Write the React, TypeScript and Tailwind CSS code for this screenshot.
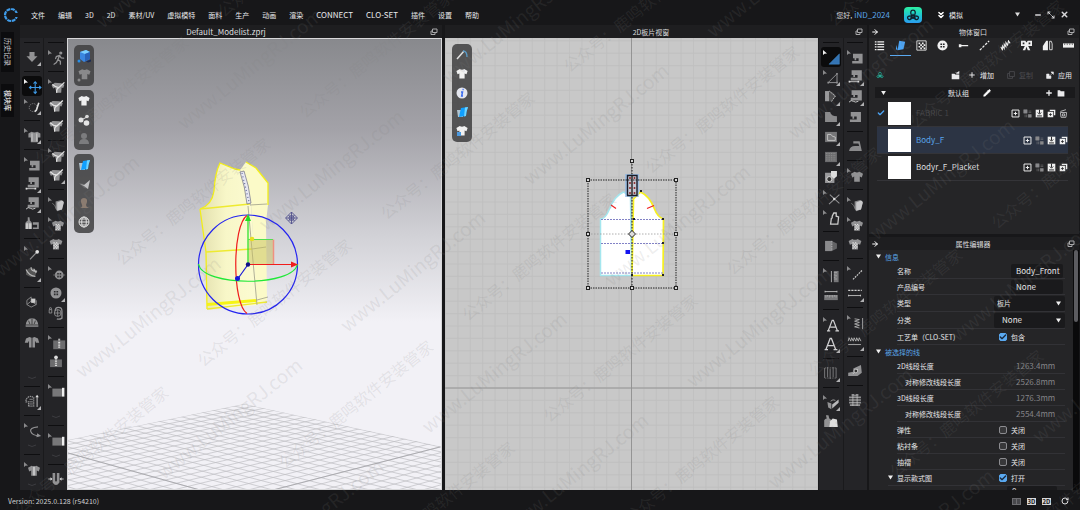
import React, { useState } from 'react';
import { Check, Pencil, Plus, RotateCw, X, ChevronsDown, Maximize2, Minus, ArrowRight } from 'lucide-react';

const SHIRT = 'M7 4 2.500 6.500 4 11l2.500-1V16.500h7V10l2.500 1L17.500 6.500 13 4q-3 2-6 0z';
const MACHINE = 'M5 4h12v12H4v-3h8V9.500H9V12H7V9.500H5z';

type ToolItem =
  | { kind: string; label: string; cursor?: boolean; corner?: boolean; active?: boolean }
  | 'sep'
  | 'more'
  | 'moreShort'
  | 'moreTall';

/** Drawings of the tool buttons, all on a 20x20 grid */
const toolArt: Record<string, React.ReactNode> = {
  down: <path d="M7 4h6v5h3.500L10 16 3.500 9H7z" />,
  walk: (
    <g fill="none" stroke="currentColor" strokeWidth="1.6" strokeLinecap="round">
      <circle cx="13.500" cy="3" r="1.200" fill="currentColor" />
      <path d="M12 6 10 11l3 2.500V17M10 11l-2 4-3 2M12 6 8 7.500 7 10M12 6l2 3 3 .5" />
    </g>
  ),
  move: (
    <g fill="none" stroke="#3f9be8" strokeWidth="1.300">
      <path d="M11.500 3v14M4.500 10h14" />
      <path d="M9.500 5 11.500 2.700 13.500 5M9.500 15l2 2.300 2-2.300M6.500 8 4.300 10l2.200 2M16.500 8l2.200 2-2.200 2" />
    </g>
  ),
  lasso: (
    <g fill="none" stroke="currentColor">
      <circle cx="9" cy="10" r="5" strokeDasharray="1.500 1.200" />
      <path d="m16 4-3 9-2 2" stroke="#ddd" strokeWidth="2" />
    </g>
  ),
  shirt: <path d={SHIRT} />,
  vest: (
    <g>
      <path d="M7 4 3 6v5h3v6h9v-6h3V6l-4-2q-3.500 1.500-7 0z" />
      <path d="M7.500 6v10M13.500 6v10" stroke="#ddd" />
    </g>
  ),
  shirtBrush: (
    <g>
      <path d="M6 4 2 7l2 4 2.500-1L8 16.500h6l.5-6.500 2 .5 1.500-4-4-2z" />
      <path d="M3 6q4 4 8 4l7-6.500M11.500 10q-4 1-3 6.500" fill="none" stroke="#e5e5e5" strokeWidth="1.5" />
    </g>
  ),
  machine: <path d={MACHINE} />,
  machineLine: (
    <g>
      <path d={MACHINE} transform="translate(1 -2)" />
      <path d="M3 15.500h11" stroke="#ddd" />
      <path d="M2.500 14.500h2v2h-2zM13 14.500h2v2h-2z" fill="#ddd" />
    </g>
  ),
  machineWave: (
    <g>
      <path d={MACHINE} transform="translate(1 -2)" />
      <path d="M3 16q2.500-3 5-1t6 0" fill="none" stroke="#ddd" />
    </g>
  ),
  mannequin: (
    <g>
      <path d="M5 2h2l.5 4L9.500 8v8h-7V8L5 6zM11 8h7v8h-7v-2h5v-3h-5z" />
      <path d="M2.500 9h3v7h-3zM6.500 9h3v7h-3z" fill="#ccc" />
    </g>
  ),
  pin: (
    <g>
      <path d="m5 16 8-8.500" stroke="currentColor" strokeWidth="1.500" />
      <circle cx="14" cy="6.500" r="2.300" fill="#e0e0e0" />
    </g>
  ),
  fold3d: (
    <g>
      <path d="M3 8q3-5 7-4l6 3-2 6-5 2-6-3z" fill="#555" />
      <path d="M3 6q4 8 11 8M9 3q-1 5 7 5M12 5l3 5" fill="none" stroke="#bbb" strokeWidth="1.3" />
    </g>
  ),
  box3d: (
    <g fill="none" stroke="currentColor">
      <path d="m4 8 5-4M4 8v5l5 3 6-3V8M9 4v5l-5 4M9 9l6 4" />
      <path d="M9 6h5v5H9z" fill="#ccc" stroke="none" />
    </g>
  ),
  cap: (
    <g>
      <path d="M2.500 15.500q0-10 7.500-10t7.500 10z" />
      <path d="M10 6v7M6 8.500l1.500 4M14 8.500l-1.500 4M3 13.500h14" stroke="#333" fill="none" />
    </g>
  ),
  pattern: <path d="M7 4 3 6 1.500 11h4V9.500H6.500V16.500h3V5zM13 4l4 2 1.500 5h-4V9.500H13.500V16.500h-3V5z" />,
  height: (
    <g>
      <path d="M6 5 3 8v3h3v5h6V6q-3-2-6-1z" fill="none" stroke="currentColor" strokeDasharray="1.500 .8" strokeWidth="1.5" />
      <path d="M7 8h4M7 11h4M7 13.500h4" stroke="currentColor" />
      <path d="M16 4v13" stroke="#ddd" />
      <path d="m14 5.500 2-3 2 3z" fill="#ddd" />
    </g>
  ),
  curve: (
    <g>
      <path d="M15 4Q4 5 6 10t10 5" fill="none" stroke="currentColor" strokeWidth="1.500" />
      <path d="m14 12 5 3.500-6 1.500z" />
    </g>
  ),
  shirtZip: (
    <g>
      <path d={SHIRT} />
      <path d="M10 5v11" stroke="#e5e5e5" strokeWidth="1.500" />
    </g>
  ),
  roll: (
    <g>
      <path d="m7 5 7-2 3 3-2 9-6 2-2-3z" fill="#8a8a8c" />
      <path d="m9 6 6-2.500q3 1 2 4L15 15l-6 1z" fill="#c8c8ca" />
      <path d="M3 7q3 2 5 7" stroke="#888" fill="none" />
    </g>
  ),
  shirtCheck: (
    <g>
      <path d={SHIRT} />
      <path d="M7 8h1.500v1.500H7zM10 8h1.500v1.500H10zM8.500 9.500H10V11H8.500zM11.500 9.500H13V11h-1.500zM7 11h1.500v1.500H7zM10 11h1.500v1.500H10zM8.500 12.500H10V14H8.500zM11.500 12.500H13V14h-1.500zM7 14h1.500v1.500H7zM10 14h1.500v1.500H10z" fill="#e5e5e5" />
    </g>
  ),
  button: (
    <g>
      <circle cx="10" cy="10" r="6.500" />
      <path d="M7.500 7.500h2v2h-2zM10.500 7.500h2v2h-2zM7.500 10.500h2v2h-2zM10.500 10.500h2v2h-2z" fill="#2c2c2e" />
    </g>
  ),
  buttonSmall: (
    <g>
      <circle cx="11.500" cy="10.500" r="5.500" />
      <path d="M4 10.500h15" stroke="#777" />
      <path d="M9 8h2v2H9zM12 8h2v2h-2zM9 11.500h2v2H9zM12 11.500h2v2h-2z" fill="#2c2c2e" />
    </g>
  ),
  buttonLock: (
    <g fill="none" stroke="currentColor">
      <path d="M2 6h3v4H2zM2.500 6V4q1-1 2 0v2" />
      <path d="M9 8q0-4.500 4-4.500T17 8v8q-3 2-6 1" strokeWidth="1.500" />
      <circle cx="12" cy="10" r="4" />
      <path d="M8 10h8M12 6v8" />
    </g>
  ),
  zipper: (
    <g>
      <path d="M4 6h15v11H4z" fill="#6c6c6e" />
      <path d="M11.500 4v12" stroke="#ddd" strokeWidth="2.500" strokeDasharray="1.200 .8" />
    </g>
  ),
  zipBlock: (
    <g>
      <path d="M3 7h14v9H3z" fill="#6c6c6e" />
      <path d="M10 7v9" stroke="#ddd" strokeWidth="2.500" strokeDasharray="1.200 1" />
      <circle cx="10" cy="4.500" r="2.200" fill="#ddd" />
    </g>
  ),
  piping: (
    <g>
      <path d="M3 5h12v10H3z" fill="#777779" />
      <path d="M15 4h3v11h-3z" fill="#eee" />
    </g>
  ),
  tube: (
    <g>
      <path d="M6 3h3v9q1 2 2 0V3h3v11q-4 6-8 0z" />
      <path d="M1 10h3M16 10h3" stroke="#ddd" />
      <path d="m3.500 8 2.500 2-2.500 2zM16.500 8 14 10l2.500 2z" fill="#ddd" />
    </g>
  ),
  triangle: <path d="M18 4v13H5z" fill="#3474b4" stroke="#4c9ae0" strokeWidth=".5" />,
  triEdit: (
    <g fill="none" stroke="currentColor" strokeWidth="1.200">
      <path d="M15 4v11H4z" />
      <path d="M14 3h2v2h-2zM3 14h2v2H3zM14 14h2v2h-2z" fill="currentColor" stroke="none" />
    </g>
  ),
  dart: (
    <g>
      <path d="M3 3h5v12H3z" fill="#9a9a9c" />
      <path d="M8 3q5 1 8 6l-6 6H8z" fill="#4a4a4c" />
      <path d="m8 3 7 6-5 7" fill="none" stroke="#ddd" strokeDasharray="2 1" />
    </g>
  ),
  poly: <path d="M3 4h6q1 5 8 5v7H3z" fill="#8a8a8c" />,
  polyInner: (
    <g>
      <path d="M3 4h14v12H3z" fill="#777779" />
      <path d="M6 7h4q1 3 5 3v4H6z" fill="none" stroke="#ccc" />
    </g>
  ),
  rectDots: (
    <g>
      <path d="M3 4h14v12H3z" fill="#6c6c6e" />
      <path d="M4 6h12M4 8.500h12M4 11h12M4 13.500h12" fill="none" stroke="#999" strokeDasharray="1 1" />
    </g>
  ),
  pocket: (
    <g>
      <path d="M3 5h11v12H3z" fill="#9a9a9c" />
      <path d="M10 3h7v6l-3.500 3L10 9z" fill="#ddd" />
      <circle cx="8" cy="12.500" r="3" fill="#333" stroke="#eee" />
    </g>
  ),
  cross: (
    <g>
      <path d="m6 5 12 11M18 5 5 17" stroke="currentColor" strokeWidth="1.300" />
      <circle cx="11.500" cy="10.500" r="1.500" fill="#ddd" />
    </g>
  ),
  bag: <path d="M8 9 7 17h9l1-9-3-1V3h-3L9 7v3" fill="none" stroke="#ccc" strokeWidth="1.600" />,
  foldPiece: (
    <g>
      <path d="M3 4h8v12H3z" fill="#8a8a8c" />
      <path d="m11 4 6 3v6l-6 3z" fill="#636365" />
      <path d="M11 4v12" stroke="#ddd" strokeDasharray="1 1" />
    </g>
  ),
  rulerV: (
    <g>
      <path d="M8 3v14" stroke="#ccc" />
      <path d="M11 3h6v14h-6z" fill="#777779" />
      <path d="M11 5h4M11 7h2M11 9h4M11 11h2M11 13h4" stroke="#ccc" strokeWidth=".6" />
    </g>
  ),
  rulerH: (
    <g>
      <path d="M3 6h14M3 5v2M17 5v2" stroke="#ccc" />
      <path d="M2 10h16v6H2z" fill="#777779" />
      <path d="M4 10v3M6 10v2M8 10v3M10 10v2M12 10v3M14 10v2M16 10v3" stroke="#ccc" strokeWidth=".6" />
    </g>
  ),
  dashDiag: <path d="M5 16 17 4" stroke="#ccc" strokeWidth="1.500" strokeDasharray="2.200 1.200" />,
  dashLines: (
    <g stroke="#ccc">
      <path d="M2 7h16" strokeWidth="1.500" strokeDasharray="2.500 1.200" />
      <path d="M2 13h15M2.500 12v2M16.500 12v2" />
    </g>
  ),
  zigzagV: <path d="m7 4 6 1-6 2 6 1.500-6 2 6 1.500-6 2 6 1.500M17 3v14" fill="none" stroke="#bbb" />,
  zigzagH: <path d="m2 9 1-4 2 4 1-4 2 4 1-4 2 4 1-4 2 4 1-4 2 4M2 13h15" fill="none" stroke="#bbb" />,
  pleat: (
    <g fill="none" stroke="#858588">
      <path d="M2.500 4v12M6 3v12M9 5v12M12.500 3v12M16 4v12" />
      <path d="M3 4h13M3 16h13" strokeDasharray="1 1" />
    </g>
  ),
  machineTilt: (
    <g>
      <path d="m2 12 6-1V7l9-4 1 9-5 4H2z" />
      <path d="m8 13 5-5" stroke="#eee" />
      <circle cx="11" cy="10" r="2.200" fill="#333" stroke="#ccc" />
    </g>
  ),
  grade: (
    <g>
      <path d="m3 8 5 2v7l-4-2z" />
      <path d="m9 11 8-6v4l-8 7z" fill="#b8b8ba" />
      <path d="M7 7q3-3 6-1" stroke="#aaa" fill="none" />
    </g>
  ),
  gift: (
    <g>
      <path d="M3 6h14v2H3zM3 9h14v2H3zM3 12h14v2H3zM4 15h12v2H4z" />
      <path d="M7.500 4v13M12.500 4v13" stroke="#ccc" fill="none" strokeWidth=".8" />
      <path d="M6 3h3l1 2 1-2h3v2.500H6z" />
    </g>
  ),
  figures: (
    <g>
      <path d="M2 8q1-2 3-2l-1-4h3l1 4 3 2v8H2z" />
      <path d="m9 9 3-3 5 1 1 9H8z" fill="#ddd" />
    </g>
  ),
  iron: <path d="M3 16q1-6 7-6h5l-1-3H8V4.500h7.500L18 16z" fill="#8a8a8c" />,
  letterA: <path d="m4 16.500 5-13h1.500l5 13M6.500 12h7M2.500 16.500h4M13 16.500h4.500" fill="none" stroke="#cfcfd1" strokeWidth="1.500" />,
};

const leftTools: ToolItem[] = [
  'sep', { kind: 'down', label: 'Simulate', corner: true },
  'sep', { kind: 'move', label: 'Select and move', cursor: true, active: true },
  { kind: 'lasso', label: 'Brush select', cursor: true, corner: true },
  'sep', { kind: 'vest', label: 'Arrange garment', cursor: true, corner: true },
  'sep', { kind: 'machine', label: 'Edit sewing', cursor: true },
  { kind: 'machineLine', label: 'Segment sewing', corner: true },
  { kind: 'machineWave', label: 'Free sewing', corner: true },
  { kind: 'mannequin', label: 'Fit sewing' },
  'sep', { kind: 'pin', label: 'Pin', cursor: true },
  { kind: 'fold3d', label: 'Fold arrangement', corner: true },
  'sep', { kind: 'box3d', label: 'Box' },
  { kind: 'cap', label: 'Cap' },
  { kind: 'pattern', label: 'Patterns' },
  'moreTall', 'sep', { kind: 'height', label: 'Measure', corner: true },
  'sep', { kind: 'curve', label: 'Curve', cursor: true },
  'moreShort', 'sep', { kind: 'shirtZip', label: 'Garment', cursor: true },
  'moreShort',
];

const leftToolsOuter: ToolItem[] = [
  'sep', { kind: 'walk', label: 'Avatar pose', cursor: true },
  'sep', { kind: 'shirtBrush', label: 'Edit style line', cursor: true },
  { kind: 'shirtBrush', label: '3D pen' },
  { kind: 'shirtBrush', label: '3D pen garment' },
  'sep', { kind: 'shirtBrush', label: 'Edit line', cursor: true },
  { kind: 'shirtBrush', label: 'Line', corner: true },
  'sep', { kind: 'roll', label: 'Edit texture', cursor: true },
  { kind: 'shirtCheck', label: 'Graphic', cursor: true },
  { kind: 'shirtCheck', label: 'Graphic all' },
  'sep', { kind: 'buttonSmall', label: 'Move button', cursor: true },
  { kind: 'button', label: 'Button', corner: true },
  { kind: 'buttonLock', label: 'Fasten button' },
  'sep', { kind: 'zipper', label: 'Edit zipper', cursor: true },
  { kind: 'zipBlock', label: 'Zipper' },
  'sep', { kind: 'piping', label: 'Piping', cursor: true },
  'more', 'sep', { kind: 'piping', label: 'Binding', cursor: true },
  'moreShort', 'sep', { kind: 'tube', label: 'Tube' },
];

const rightTools: ToolItem[] = [
  'sep', { kind: 'triangle', label: 'Transform pattern', cursor: true, active: true },
  { kind: 'triEdit', label: 'Edit pattern', cursor: true, corner: true },
  { kind: 'dart', label: 'Dart', corner: true },
  { kind: 'poly', label: 'Polygon', corner: true },
  { kind: 'polyInner', label: 'Internal polygon', corner: true },
  { kind: 'rectDots', label: 'Trace', corner: true },
  { kind: 'pocket', label: 'Pocket' },
  { kind: 'cross', label: 'Slash', cursor: true },
  { kind: 'bag', label: 'Seam allowance', cursor: true },
  'sep', { kind: 'foldPiece', label: 'Unfold' },
  'sep', { kind: 'rulerV', label: 'Edit measure', cursor: true },
  { kind: 'rulerH', label: 'Measure' },
  'sep', { kind: 'letterA', label: 'Edit annotation', cursor: true },
  { kind: 'letterA', label: 'Annotation', corner: true },
  'sep', { kind: 'pleat', label: 'Pleats', corner: true },
  'sep', { kind: 'grade', label: 'Grading', cursor: true, corner: true },
  { kind: 'figures', label: 'Figures' },
];

const rightToolsOuter: ToolItem[] = [
  'sep', { kind: 'machine', label: 'Edit sewing', cursor: true },
  { kind: 'machineLine', label: 'Segment sewing', corner: true },
  { kind: 'machineWave', label: 'Free sewing', corner: true },
  { kind: 'machine', label: 'Check sewing' },
  'sep', { kind: 'iron', label: 'Steam' },
  'sep', { kind: 'shirt', label: 'Garment', cursor: true },
  'sep', { kind: 'roll', label: 'Edit texture', cursor: true },
  { kind: 'shirtCheck', label: 'Graphic', cursor: true },
  { kind: 'shirtCheck', label: 'Graphic all' },
  'sep', { kind: 'dashDiag', label: 'Edit topstitch', cursor: true },
  { kind: 'dashLines', label: 'Topstitch', corner: true },
  'sep', { kind: 'zigzagV', label: 'Edit puckering', cursor: true },
  { kind: 'zigzagH', label: 'Puckering', corner: true },
  'sep', { kind: 'machineTilt', label: 'Shirring' },
  'sep', { kind: 'gift', label: 'Packing' },
];

function ToolColumn({ items }: { items: ToolItem[] }) {
  return (
    <div className="flex flex-1 flex-col items-center overflow-hidden bg-[#242427]">
      {items.map((item, i) => {
        if (item === 'sep') {
          return (
            <div key={i} className="flex h-[9px] w-4 shrink-0 items-center">
              <div className="h-px w-full bg-[#0e0e10]" />
            </div>
          );
        }
        if (typeof item === 'string') {
          const height = item === 'moreTall' ? 'h-[30px]' : item === 'more' ? 'h-5' : 'h-[10px]';
          return (
            <div key={i} className={`flex shrink-0 items-end ${height}`}>
              <svg viewBox="0 0 10 6" className="h-[6px] w-[10px]">
                <path d="M1 1q4 3 8 0" fill="none" stroke="#3c3c40" />
              </svg>
            </div>
          );
        }
        return (
          <button
            key={i}
            aria-label={item.label}
            className={`flex h-5 w-5 shrink-0 items-center justify-center rounded-[3px] text-[#929294] ${
              item.active ? 'bg-[#0b0b0c]' : ''
            }`}
          >
            <svg viewBox="0 0 20 20" className="h-5 w-5" fill="currentColor">
              <g transform={item.cursor ? 'translate(4 3.600) scale(.8)' : 'translate(1.500 1.500) scale(.85)'}>
                {toolArt[item.kind]}
              </g>
              {item.cursor && <path d="M2 3v5l1.500-1.200L6 6.500z" fill={item.active ? '#f0f0f0' : '#8a8a8c'} />}
              {item.corner && <path d="M19 15v4h-4z" fill="#b0b0b2" />}
            </svg>
          </button>
        );
      })}
    </div>
  );
}

function PopOutIcon() {
  return (
    <svg viewBox="0 0 8 8" className="h-2 w-2" fill="none" stroke="#a8a8aa">
      <path d="M2.500 1h4.500v3.500H2.500z" />
      <path d="M2.500 3H1v3.500h4V5" />
    </svg>
  );
}

function TitleBar({ title, arrow }: { title: string; arrow?: boolean }) {
  return (
    <div className="flex h-[13px] shrink-0 items-center bg-[#1e1e20] px-[2px] text-[#dcdcde]">
      {arrow && <ArrowRight className="h-2 w-2 text-white" strokeWidth={3} />}
      <h2 className="flex-1 text-center">{title}</h2>
      <button aria-label={`Pop out ${title}`} className="pr-[2px]">
        <PopOutIcon />
      </button>
    </div>
  );
}

const menuItems = ['文件', '编辑', '3D', '2D', '素材/UV', '虚拟模特', '面料', '生产', '动画', '渲染', 'CONNECT', 'CLO-SET', '插件', '设置', '帮助'];

function Trefoil({ className }: { className: string }) {
  return (
    <svg viewBox="0 0 16 16" className={className} fill="none" stroke="currentColor" strokeWidth="1.500">
      <path d="M7 9.500C4.500 6 5 2.500 8 2.500s3.500 3.500 1 7M9 9.500c4-1 6 .5 5 2.500s-4 2-6-2M7 9.500c-4-1-6 .5-5 2.500s4 2 6-2" />
      <path d="m8 7.500-2.500 4h5z" />
    </svg>
  );
}

function MenuBar() {
  return (
    <header className="flex h-[25px] shrink-0 items-center px-[3px]">
      <svg viewBox="0 0 16 16" className="mt-1 h-4 w-4 shrink-0">
        <circle cx="8" cy="8" r="6" fill="none" stroke="#3f9be8" strokeWidth="2.200" strokeDasharray="4.200 .8" pathLength="40" />
        <path d="M12 6h4v4h-4z" fill="#171719" />
      </svg>
      <nav className="ml-3 mt-1 flex gap-[13px] text-[#eaeaec]">
        {menuItems.map((item) => (
          <button key={item} className={/^C/.test(item) ? 'text-[8px]' : ''}>
            {item}
          </button>
        ))}
      </nav>
      <div className="ml-auto mt-1 flex items-center">
        <p className="flex items-center gap-[2px] text-[#dcdcde]">
          您好, <a href="#account" className="text-[8px] text-[#5aa4e8]">iND_2024</a>
        </p>
        <button aria-label="Connect" className="ml-[14px] flex h-4 w-[18px] items-center justify-center rounded-[4px] bg-linear-to-b from-[#2ef0a0] to-[#2c9cf0] text-[#10202c]">
          <Trefoil className="h-[14px] w-[14px]" />
        </button>
        <ChevronsDown className="ml-[14px] h-[10px] w-[10px] text-white" strokeWidth={3.5} />
        <button className="ml-[3px] flex w-[71px] items-center justify-between text-[#eaeaec]">
          模拟
          <svg viewBox="0 0 6 5" className="h-[5px] w-[5px]" fill="#ddd"><path d="M0 0h6L3 5z" /></svg>
        </button>
        <div className="ml-[14px] mr-2 flex gap-[5px] text-[#d8d8da]">
          <button aria-label="Minimize"><Minus className="h-2 w-2" strokeWidth={4} /></button>
          <button aria-label="Restore"><Maximize2 className="h-2 w-2 -scale-x-100" strokeWidth={3} /></button>
          <button aria-label="Close"><X className="h-[9px] w-[9px]" strokeWidth={4} /></button>
        </div>
      </div>
    </header>
  );
}

/** Small coloured icons that float on both canvases */
const viewArt: Record<string, React.ReactNode> = {
  cube: (
    <g>
      <path d="m5 5 6-2 4 2v7l-6 3-4-3z" fill="#3a86e0" />
      <path d="m5 5 6-2 4 2-5 2z" fill="#7cd0ff" />
      <path d="m10 7 5-2v7l-5 2.500z" fill="#2a62b8" />
      <path d="m11 14.500 5-2v2l-3 1z" fill="#1c2c54" />
      <circle cx="4" cy="14" r="1.500" fill="#2890e8" />
    </g>
  ),
  shirtDim: (
    <g fill="#89898b">
      <path d={SHIRT} transform="translate(1.500 0) scale(.8)" />
      <circle cx="4" cy="14" r="1.500" />
    </g>
  ),
  shirt: <path d={SHIRT} fill="#f0f0f0" transform="translate(1.500 1) scale(.75)" />,
  shirtBlue: (
    <g>
      <path d={SHIRT} fill="#f0f0f0" transform="translate(1.500 1) scale(.75)" />
      <path d="M4 10h4v4H4z" fill="#4c9ae0" />
    </g>
  ),
  molecules: (
    <g fill="#e4e4e4">
      <circle cx="6" cy="9" r="2.500" />
      <circle cx="12" cy="5.500" r="1.800" />
      <circle cx="11.500" cy="12" r="2.800" />
      <path d="m6 9 6-3" stroke="#e4e4e4" />
    </g>
  ),
  person: (
    <g fill="#7c7c7e">
      <circle cx="9" cy="6" r="3" />
      <path d="M4 14q0-5 5-5t5 5z" />
    </g>
  ),
  fabric: (
    <g>
      <path d="M4 7h6v7H5z" fill="#b0c4d0" />
      <path d="m8 5 7-1q-2 5-2 9l-7 1q1-5 2-9z" fill="#10a0ff" />
      <path d="m12 4.500 3-.5q-2 5-2 9l-2 .5z" fill="#70d4ff" />
    </g>
  ),
  fabricDim: (
    <g>
      <path d="m4 8 5 1 5 5-5-1z" fill="#68686a" />
      <path d="m5 9 4 1 6-5-2 9-4-3z" fill="#c0c0c2" />
    </g>
  ),
  head: <path d="M5 14q3-1 2-3-3-7 2-7t2 7q0 2 3 3z" fill="#8c7c70" />,
  globe: (
    <g fill="none" stroke="#e0e0e0">
      <circle cx="9" cy="9" r="5" />
      <ellipse cx="9" cy="9" rx="2.300" ry="5" />
      <path d="M4 9h10M5 6h8M5 12h8" />
    </g>
  ),
  needle: (
    <g fill="none">
      <path d="m4 13 7-8" stroke="#e0e0e0" strokeWidth="1.500" />
      <path d="M10 5q4 0 4 6" stroke="#5a9cc8" strokeWidth="1.300" />
    </g>
  ),
  info: (
    <g>
      <circle cx="9" cy="9" r="5.500" fill="#e4e6ee" />
      <path d="M9.500 5.500h1.200M8 8h1.500L8.700 12H10" fill="none" stroke="#3a6cf0" strokeWidth="1.500" />
    </g>
  ),
};

function ViewTools({ kinds }: { kinds: string[] }) {
  return (
    <div className="flex w-5 flex-col items-center gap-px rounded-[5px] bg-[#3e3e40]/85 py-[2px]">
      {kinds.map((kind) => (
        <button key={kind} aria-label={kind}>
          <svg viewBox="0 0 18 18" className="h-[18px] w-[18px]">{viewArt[kind]}</svg>
        </button>
      ))}
    </div>
  );
}

// The floor lines run to two far points on the horizon and are evenly
// spaced where they cross the bottom edge of the view.
const floorSteps = Array.from({ length: 40 }, (_, i) => i);

function AvatarView() {
  return (
    <div className="relative min-w-0 flex-1 overflow-hidden border border-[#d8d8da]">
      <svg viewBox="68 39 373 450" preserveAspectRatio="xMidYMid slice" className="h-full w-full" role="img" aria-label="3D garment view">
        <defs>
          <linearGradient id="sky" x1="0" y1="0" x2="0" y2="1">
            <stop offset="0" stopColor="#88898d" />
            <stop offset=".2" stopColor="#a3a2a8" />
            <stop offset=".44" stopColor="#d2d2d7" />
            <stop offset=".63" stopColor="#f2f1f6" />
          </linearGradient>
          <linearGradient id="cloth" x1="0" y1="0" x2="1" y2="0">
            <stop offset="0" stopColor="#e2dfae" />
            <stop offset=".45" stopColor="#f8f7c8" />
            <stop offset="1" stopColor="#fcfbd2" />
          </linearGradient>
          <clipPath id="floor">
            <path d="M244 404-176 490v20H660v-16z" />
          </clipPath>
        </defs>
        <path d="M0 39h600v450H0z" fill="url(#sky)" />
        <g clipPath="url(#floor)" stroke="#bebec3" strokeWidth=".7">
          {floorSteps.map((i) => (
            <path key={i} d={`M-1367 51 ${637 - i * 24.28} 490M2007 43 ${-176 + i * 24.94} 490`} />
          ))}
          <path d="M68 453 200 490M440 447 273 490" stroke="#9c9ca0" />
        </g>

        {/* garment */}
        <path d="M200 209q12-4 14-18 1-18 6-28l15 6 5 1 10 34 1 2 7 99-51 5-1-57z" fill="url(#cloth)" />
        <path d="m240 170 6-8 10 6 12 15v22l-2 17 1 78-10 4-6-100z" fill="#fbfac8" />
        <path d="m207 303 50-4v3l-50 4z" fill="#f6f414" />
        <path d="M200 209q12-4 14-18 1-18 6-28l15 6 5 1M246 162l10 6 12 15v22M200 209l6 43 1 57" fill="none" stroke="#f2ee18" strokeWidth="1.300" />
        <path d="m200 209 50-5M206 252l46-3M207 309l60-7" fill="none" stroke="#eeea30" strokeWidth="1.300" />
        <path d="m250 205 17-1M252 249l14-2M248 206l9 99M257 300l11-3" fill="none" stroke="#a8a890" strokeWidth=".9" />
        <path d="m240 172 4-1q5 14 7 32l-4 1q-2-18-7-32z" fill="#e8e8f2" stroke="#707080" strokeWidth=".7" />
        <path d="m242 173 7 29" stroke="#6870a0" strokeDasharray="1 2.500" strokeWidth="1.300" />

        {/* gizmo */}
        <path d="M248.500 239.500h24.500v24.500h-24.500z" fill="#c8c05a" fillOpacity=".5" />
        <path d="M248.500 239.500H273" stroke="#50e050" />
        <path d="M273.500 239.500v24.500" stroke="#f09080" strokeWidth="1.500" />
        <g fill="none" strokeWidth="1.200">
          <circle cx="248" cy="264.500" r="49.500" stroke="#2424f0" />
          <path d="M247 215.500c-15 10-15 88 0 98" stroke="#f01c1c" />
          <path d="M198.500 264c4 23 95 23 99 0" stroke="#20e838" />
          <path d="M248 264v-45" stroke="#20e020" />
          <path d="M248 264.500h45" stroke="#f01c1c" />
          <path d="m248 264.500-10 14" stroke="#1818d8" />
        </g>
        <circle cx="252" cy="239" r="2.300" fill="#e8e020" />
        <path d="m248 214 3 7h-6z" fill="#20e020" />
        <path d="m298 264.500-7 3v-6z" fill="#f01c1c" />
        <circle cx="248" cy="264.500" r="2.200" fill="#101088" />
        <circle cx="237.500" cy="278.500" r="2.500" fill="#1818d8" />
        <g fill="none" stroke="#50508c" strokeWidth=".9">
          <path d="m291.500 212 6 6-6 6-6-6zM286 218h11M291.500 212v12M288.500 215l6 6M294.500 215l-6 6" />
          <circle cx="291.500" cy="218" r="2.500" />
        </g>
      </svg>
      <div className="absolute left-[6px] top-[6px] flex flex-col gap-1">
        <ViewTools kinds={['cube', 'shirtDim']} />
        <ViewTools kinds={['shirt', 'molecules', 'person']} />
        <ViewTools kinds={['fabric', 'fabricDim', 'head', 'globe']} />
      </div>
    </div>
  );
}

const gridSteps = Array.from({ length: 60 }, (_, i) => i - 30);
const handles = [[588, 180], [632, 161], [676, 180], [588, 234], [676, 234], [588, 288], [632, 288], [676, 288]];

function PatternView() {
  return (
    <div className="relative min-w-0 flex-1 overflow-hidden bg-[#c8c8c8]">
      <svg viewBox="445 38 373 452" preserveAspectRatio="xMidYMid slice" className="h-full w-full" role="img" aria-label="2D pattern view">
        <g stroke="#c0c0c0" strokeWidth=".9">
          {gridSteps.map((i) => (
            <path key={i} d={`M${631.5 + i * 12.4} 0V600M0 ${388 + i * 12.4}H1100`} />
          ))}
        </g>
        <path d="M631.500 0V600M0 388H1100" stroke="#8e8e8e" strokeWidth=".9" />

        {/* front body, both halves */}
        <path d="M600.500 275.500V219q5 0 9-10 5-13 14-17l7 5 1 78.500z" fill="#fff" stroke="#a4e6ee" strokeWidth="1.500" />
        <path d="M632 275.500 633.500 199l7-7q9 4 14 17 3 8 9 10l-.5 56.500z" fill="#fff" stroke="#f6f020" strokeWidth="1.700" />
        <path d="M601 219.500h62M601 243.500h62M601 273h62" stroke="#7474c0" strokeWidth=".9" strokeDasharray="2 1" />
        <path d="m611 205 5 3.500M647 208.500l7-3" stroke="#f02020" strokeWidth="1.200" />
        <path d="M632 161v127" stroke="#222" strokeDasharray="1.500 1.500" />

        {/* placket */}
        <path d="M625 174h14v23h-14z" fill="#8cb8e8" fillOpacity=".7" />
        <path d="M627.500 175.500h9.500v20h-9.500z" fill="#c8c8d4" stroke="#181c28" strokeWidth="1.400" />
        <path d="M630 177v18M634.500 177v18" stroke="#903838" strokeWidth="1.600" strokeDasharray="2 3" />
        <path d="M632 175v20" stroke="#222" strokeWidth="1.400" />

        <path d="M588 180h88v108h-88z" fill="none" stroke="#222" strokeDasharray="1.500 1" />
        <path d="M588 234h88" stroke="#999" strokeWidth=".8" strokeDasharray="1.500 1.500" />
        {handles.map(([x, y]) => (
          <rect key={`${x}-${y}`} x={x - 1.5} y={y - 1.5} width="3" height="3" fill="#d8d8d8" stroke="#222" />
        ))}
        <path d="M633 218h2v2h-2zM662 218h2v2h-2zM662 242h2v2h-2zM662 274h2v2h-2zM640 190h2v2h-2zM631 274h2v2h-2z" fill="#222" />
        <path d="m632 230.500 3.500 3.500-3.500 3.500-3.500-3.500z" fill="#ddd" stroke="#222" />
        <path d="M625.500 250h4.500v4h-4.500z" fill="#1414f0" />
      </svg>
      <div className="absolute left-[7px] top-[6px]">
        <ViewTools kinds={['needle', 'shirt', 'info', 'fabric', 'shirtBlue']} />
      </div>
    </div>
  );
}

const glyphArt: Record<string, React.ReactNode> = {
  list: <path d="M1 1.500h2v1.500H1zM4 1.500h8v1.500H4zM1 4.500h2V6H1zM4 4.500h8V6H4zM1 7.500h2V9H1zM4 7.500h8V9H4zM1 10.500h2V12H1zM4 10.500h8V12H4z" />,
  fabric: (
    <g fill="#4ca4f4">
      <path d="m5 1 7 1-2 9-7 1z" />
      <path d="M2 6 1 11l2 1z" />
    </g>
  ),
  checker: (
    <g>
      <path d="M1 1h11v11H1z" fill="none" stroke="currentColor" />
      <path d="M3 3h2v2H3zM7 3h2v2H7zM5 5h2v2H5zM9 5h2v2H9zM3 7h2v2H3zM7 7h2v2H7zM5 9h2v2H5zM9 9h2v2H9z" />
    </g>
  ),
  button: (
    <g>
      <circle cx="6.500" cy="6.500" r="6" />
      <path d="M4 4h2v2H4zM7 4h2v2H7zM4 7h2v2H4zM7 7h2v2H7z" fill="#252527" />
    </g>
  ),
  buttonhole: <path d="M1 5h3v1h8v1.500H4v1H1z" />,
  stitch: <path d="m1 12 11-11" stroke="currentColor" strokeWidth="1.500" strokeDasharray="3 1.500" />,
  pucker: <path d="m1 8 2 4 0-5 2 3 0-5 2 3 0-5 2 3 1-5 2 3" fill="none" stroke="currentColor" strokeWidth="1.200" />,
  bow: (
    <g>
      <path d="M0 1h5l1.500 2L8 1h5v6H8.500l2.500 5H8L6.500 8 5 12H2l2.500-5H0z" />
      <path d="M2 3h2v2H2zM9 3h2v2H9z" fill="#252527" />
    </g>
  ),
  glove: (
    <g>
      <path d="M1 12V7l4-6h2v11z" />
      <path d="M9 1.500h2l1 3v7H9z" fill="none" stroke="currentColor" />
    </g>
  ),
  tape: (
    <g>
      <path d="M0 4h13v5H0z" />
      <path d="M2 4v2M5 4v2M8 4v2M11 4v2" stroke="#555" />
    </g>
  ),
  plusBox: <path d="M1.500 1.500h10v10h-10zM6.500 4v5M4 6.500h5" fill="none" stroke="currentColor" strokeWidth="1.400" />,
  quads: <path d="M1 1h5v5H1zM8 3h4M8 5h4M3 8v4M5 8v4M7.500 8h4.500v4H7.500z" fill="#88888a" stroke="#88888a" strokeWidth=".7" />,
  save: (
    <g>
      <path d="M1 1h11v11H1z" />
      <path d="M6.500 1v5.500M4 5l2.500 2.500L9 5M3 10h7" fill="none" stroke="#252527" strokeWidth="1.400" />
    </g>
  ),
  copyPlus: (
    <g>
      <path d="M4 1h8v8h-2V3H4zM1 4h8v8H1z" />
      <path d="M5 6v4M3 8h4" stroke="#252527" strokeWidth="1.200" />
    </g>
  ),
  trash: <path d="M2 5h9l-1 7H3zM2 3.500l8-2.500M5 7h3v3H5z" fill="none" stroke="#b8b8ba" strokeWidth="1.400" />,
  folder: <path d="M1 2h4l1 1.500h6V12H1z" />,
  folderAdd: <path d="M1 4h4l1 1h6v7H1zM6 1l2 1.500L12 0v4H8z" />,
  copy: <path d="M4 1h8v8H4zM4 4H1v8h8V9" fill="none" stroke="currentColor" strokeWidth="1.300" />,
  apply: <path d="M1 5h4v3h3v4H1zM7 7l4-4M8 1.500h4v4z" stroke="currentColor" />,
};

function Glyph({ name, className }: { name: string; className: string }) {
  return (
    <svg viewBox="0 0 13 13" className={`shrink-0 ${className}`} fill="currentColor">
      {glyphArt[name]}
    </svg>
  );
}

const objectTabs = ['list', 'fabric', 'checker', 'button', 'buttonhole', 'stitch', 'pucker', 'bow', 'glove', 'tape'];

const fabrics = [
  { name: 'FABRIC 1', state: 'dim' },
  { name: 'Body_F', state: 'selected' },
  { name: 'Bodyr_F_Placket', state: '' },
];

function ObjectPanel() {
  const [selected, setSelected] = useState('Body_F');

  return (
    <section className="flex h-[209px] shrink-0 flex-col bg-[#252527]">
      <TitleBar title="物体窗口" arrow />
      <div className="flex h-[18px] shrink-0 items-stretch text-[#f0f0f0]">
        {objectTabs.map((tab) => (
          <button
            key={tab}
            aria-label={tab}
            className={`flex flex-1 justify-center border-b pt-[2px] ${tab === 'fabric' ? 'border-[#5aa9f0]' : 'border-transparent'}`}
          >
            <Glyph name={tab} className="h-[11px] w-[11px]" />
          </button>
        ))}
      </div>
      <div className="mt-[11px] flex h-4 items-center px-[7px] text-[#eaeaec]">
        <Trefoil className="h-2 w-2 text-[#20b8a0]" />
        <button aria-label="Open folder" className="ml-auto mr-2"><Glyph name="folderAdd" className="h-[9px] w-[9px]" /></button>
        <button className="flex items-center gap-1"><Plus className="h-2 w-2" strokeWidth={3} />增加</button>
        <button className="ml-[13px] flex items-center gap-1 text-[#4c4c50]" disabled><Glyph name="copy" className="h-2 w-2" />复制</button>
        <button className="ml-[13px] flex items-center gap-1"><Glyph name="apply" className="h-2 w-2" />应用</button>
      </div>
      <div className="ml-[6px] mr-1 mt-1 flex h-[11px] items-center bg-[#1a1a1c] pl-[6px] pr-[10px] text-[#eaeaec]">
        <svg viewBox="0 0 6 5" className="h-[4px] w-[5px]" fill="#eee"><path d="M0 0h6L3 5z" /></svg>
        <span className="ml-auto pl-2">默认组</span>
        <Pencil className="ml-[14px] mr-auto h-2 w-2 fill-white text-white" />
        <button aria-label="Add to group"><Plus className="mr-1 h-2 w-2" strokeWidth={4} /></button>
        <button aria-label="Group folder"><Glyph name="folder" className="h-2 w-2" /></button>
      </div>
      <ul className="ml-2 mr-[11px] mt-[2px] text-[8px]">
        {fabrics.map((fabric) => (
          <li
            key={fabric.name}
            onClick={() => setSelected(fabric.name)}
            className={`flex h-[27px] items-center border-b border-[#343438] ${selected === fabric.name ? 'bg-[#2c3444]' : ''}`}
          >
            <span className="flex w-[11px] shrink-0 justify-start">
              {fabric.state === 'dim' && <Check className="h-2 w-2 text-[#4ca4f4]" strokeWidth={4} />}
            </span>
            <span className="h-[23px] w-[23px] shrink-0 bg-white" />
            <span
              className={`ml-[5px] flex-1 ${
                fabric.state === 'dim' ? 'text-[#434346]' : selected === fabric.name ? 'text-[#5aa4e8]' : 'text-[#dcdcde]'
              }`}
            >
              {fabric.name}
            </span>
            <span className="flex gap-[3px] text-[#f0f0f0]">
              {['plusBox', 'quads', 'save', 'copyPlus', ...(fabric.state === 'dim' ? ['trash'] : [])].map((name) => (
                <button key={name} aria-label={`${name} ${fabric.name}`}>
                  <Glyph name={name} className="h-[9px] w-[9px]" />
                </button>
              ))}
            </span>
          </li>
        ))}
      </ul>
    </section>
  );
}

function SectionTitle({ children }: { children: React.ReactNode }) {
  return (
    <h3 className="flex h-[13px] items-center gap-1 text-[#5aa4e8]">
      <svg viewBox="0 0 6 5" className="h-[5px] w-[5px]" fill="#f0f0f0"><path d="M0 0h6L3 5z" /></svg>
      {children}
    </h3>
  );
}

function TextRow({ id, label, value }: { id: string; label: string; value: string }) {
  return (
    <div className="ml-[21px] flex h-4 items-center border-b border-[#323236]">
      <label htmlFor={id} className="flex-1">{label}</label>
      <input id={id} defaultValue={value} className="mr-[2px] h-[14px] w-[52px] rounded-[2px] bg-[#1a1a1c] pl-[5px] text-[8px] text-[#e6e6e8]" />
    </div>
  );
}

function SelectRow({ id, label, value, className }: { id: string; label: string; value: string; className: string }) {
  return (
    <div className="ml-[21px] flex h-[17px] items-center border-b border-[#323236]">
      <label htmlFor={id} className="flex-1">{label}</label>
      <div className="relative w-[71px]">
        <select id={id} className={`block h-[15px] w-full appearance-none rounded-[2px] bg-[#1a1a1c] text-[#e6e6e8] ${className}`}>
          <option>{value}</option>
        </select>
        <svg viewBox="0 0 6 5" className="pointer-events-none absolute right-1 top-[5px] h-[5px] w-[5px]" fill="#f0f0f0"><path d="M0 0h6L3 5z" /></svg>
      </div>
    </div>
  );
}

function CheckRow({ id, label, text, on, arrow }: { id: string; label: string; text: string; on?: boolean; arrow?: boolean }) {
  const [checked, setChecked] = useState(!!on);

  return (
    <div className={`flex h-4 items-center border-b border-[#323236] ${arrow ? 'ml-[12px]' : 'ml-[21px]'}`}>
      {arrow && <svg viewBox="0 0 6 5" className="mr-1 h-[5px] w-[5px]" fill="#f0f0f0"><path d="M0 0h6L3 5z" /></svg>}
      <span className="flex-1">{label}</span>
      <label htmlFor={id} className="flex w-[66px] items-center gap-1">
        <span className="grid">
          <input
            id={id}
            type="checkbox"
            checked={checked}
            onChange={(e) => setChecked(e.target.checked)}
            className="col-start-1 row-start-1 h-2 w-2 appearance-none rounded-[2px] border border-[#8c8c90] bg-[#38383a] checked:border-[#5aa9f0] checked:bg-[#5aa9f0]"
          />
          {checked && <Check className="pointer-events-none col-start-1 row-start-1 h-2 w-2 text-[#18283c]" strokeWidth={4} />}
        </span>
        {text}
      </label>
    </div>
  );
}

function ValueRow({ label, value, sub }: { label: string; value: string; sub?: boolean }) {
  return (
    <div className="ml-[21px] flex h-4 items-center border-b border-[#323236]">
      <span className={`flex-1 ${sub ? 'pl-2' : ''}`}>{label}</span>
      <span className="w-[49px] text-[8px] text-[#848488]">{value}</span>
    </div>
  );
}

function PropertyPanel() {
  return (
    <section className="mt-[3px] flex min-h-0 flex-1 flex-col bg-[#252527]">
      <TitleBar title="属性编辑器" arrow />
      <div className="flex min-h-0 flex-1">
        <div className="flex-1 overflow-hidden pl-[7px] pr-[8px] text-[#e6e6e8]">
          <SectionTitle>信息</SectionTitle>
          <TextRow id="name" label="名称" value="Body_Front" />
          <TextRow id="code" label="产品编号" value="None" />
          <SelectRow id="kind" label="类型" value="板片" className="pl-[3px] text-[7px]" />
          <SelectRow id="group" label="分类" value="None" className="pl-2 text-[8px]" />
          <CheckRow id="sheet" label="工艺单（CLO-SET)" text="包含" on />
          <SectionTitle>被选择的线</SectionTitle>
          <ValueRow label="2D线段长度" value="1263.4mm" />
          <ValueRow label="对称修改线段长度" value="2526.8mm" sub />
          <ValueRow label="3D线段长度" value="1276.3mm" />
          <ValueRow label="对称修改线段长度" value="2554.4mm" sub />
          <CheckRow id="elastic" label="弹性" text="关闭" />
          <CheckRow id="tape" label="粘衬条" text="关闭" />
          <CheckRow id="shirring" label="抽褶" text="关闭" />
          <CheckRow id="sketch" label="显示款式图" text="打开" on arrow />
          <input aria-label="Sketch offset" defaultValue="0" className="ml-auto mr-2 block h-[10px] w-[50px] rounded-[2px] bg-[#1a1a1c] pl-[5px] text-[8px]" />
        </div>
        <div className="w-[6px] bg-[#0a0a0b] px-px">
          <div className="h-[72px] rounded-[2px] bg-[#5c5c60]" />
        </div>
      </div>
    </section>
  );
}

function StatusBar() {
  return (
    <footer className="flex h-5 shrink-0 items-center justify-between pl-2 pr-[11px] pt-[2px] text-[#d0d0d2]">
      <p>Version: 2025.0.128 (r54210)</p>
      <div className="flex items-center gap-[6px] text-[6px] font-bold text-[#171719]">
        <button aria-label="Split view" className="flex h-[7px] w-[9px] gap-px bg-[#6c6c70] p-px">
          <span className="h-full flex-1 bg-[#48484c]" />
          <span className="h-full flex-1 bg-[#48484c]" />
        </button>
        <button className="h-[7px] w-[9px] bg-[#d8d8da] leading-[7px]">3D</button>
        <button className="h-[7px] w-[9px] bg-[#d8d8da] leading-[7px]">2D</button>
        <button aria-label="Refresh" className="ml-1"><RotateCw className="h-2 w-2 text-[#e0e0e2]" strokeWidth={3} /></button>
      </div>
    </footer>
  );
}

const TILT = (38.8 * Math.PI) / 180;

// Two alternating lines of text; only those whose middle is near the window are kept
const marks = Array.from({ length: 9 * 6 * 2 }, (_, i) => {
  const latin = i % 2 === 1;
  const col = Math.floor(i / 2) % 6;
  const row = Math.floor(i / 12);
  return {
    text: latin ? 'www.LuMingRJ.com' : '公众号：鹿鸣软件安装管家',
    size: latin ? 19 : 16,
    x: (latin ? -408 : -542) + col * 235,
    y: (latin ? 87 : 24) + row * 130,
  };
}).filter(({ x, y }) => {
  const midX = (x + 90) * Math.cos(TILT) + y * Math.sin(TILT);
  const midY = y * Math.cos(TILT) - (x + 90) * Math.sin(TILT);
  return midX > 40 && midX < 1120 && midY > -40 && midY < 550;
});

/** Diagonal text laid over the whole window */
function Watermark() {
  return (
    <svg className="pointer-events-none absolute inset-0 h-full w-full" fill="#808080" fillOpacity=".14">
      <g transform="rotate(-38.8)">
        {marks.map((mark) => (
          <text key={`${mark.x} ${mark.y}`} x={mark.x} y={mark.y} fontSize={mark.size}>{mark.text}</text>
        ))}
      </g>
    </svg>
  );
}

export default function App() {
  return (
    <div className="relative flex h-screen flex-col overflow-hidden bg-[#171719] font-['Noto_Sans_CJK_SC','Noto_Sans',sans-serif] text-[7px] leading-[10px]">
      <MenuBar />
      <main className="flex min-h-0 flex-1">
        <aside className="flex w-5 shrink-0 flex-col gap-3 pl-px pt-[7px] text-[#d0d0d2]">
          <button className="flex h-10 w-[13px] items-center justify-center bg-[#0c0c0e] [writing-mode:vertical-rl] [text-orientation:sideways]">历史记录</button>
          <button className="flex h-[33px] w-[13px] items-center justify-center bg-[#0c0c0e] font-bold [writing-mode:vertical-rl] [text-orientation:sideways]">模块库</button>
        </aside>
        <section className="flex min-w-0 flex-1 flex-col text-[8px]">
          <TitleBar title="Default_Modelist.zprj" />
          <div className="flex min-h-0 flex-1">
            <div className="flex w-[47px] shrink-0 gap-px bg-[#1a1a1c]">
              <ToolColumn items={leftTools} />
              <ToolColumn items={leftToolsOuter} />
            </div>
            <AvatarView />
          </div>
        </section>
        <section className="ml-[3px] flex min-w-0 flex-1 flex-col">
          <TitleBar title="2D板片视窗" />
          <div className="flex min-h-0 flex-1">
            <PatternView />
            <div className="flex w-[49px] shrink-0 gap-px bg-[#1a1a1c] pl-px">
              <ToolColumn items={rightTools} />
              <ToolColumn items={rightToolsOuter} />
            </div>
          </div>
        </section>
        <aside className="ml-[2px] mr-px flex w-[210px] shrink-0 flex-col">
          <ObjectPanel />
          <PropertyPanel />
        </aside>
      </main>
      <StatusBar />
      <Watermark />
    </div>
  );
}
